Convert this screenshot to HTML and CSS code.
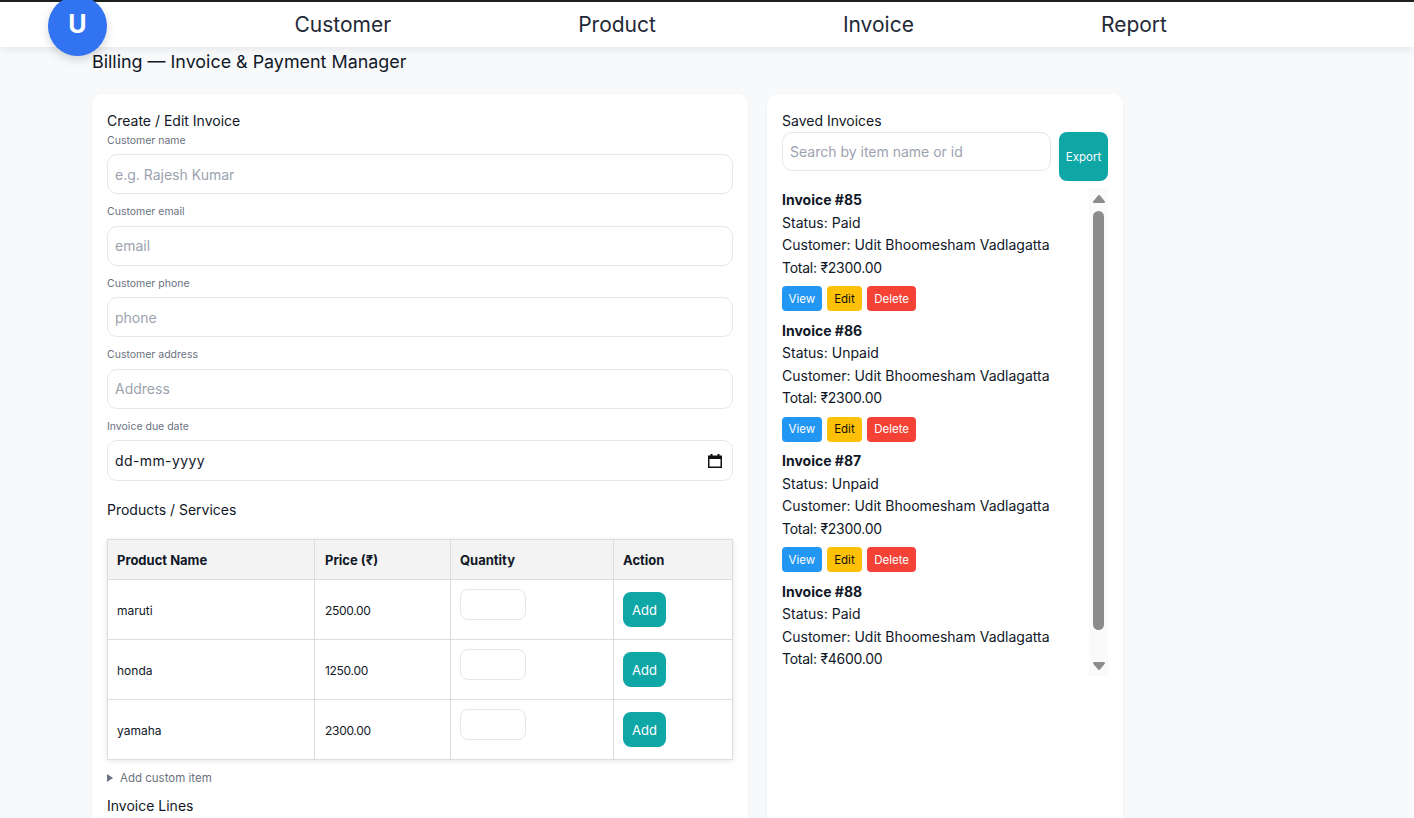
FILE: index.html
```html
<!DOCTYPE html>
<html lang="en">
<head>
    <meta charset="UTF-8">
    <meta name="viewport" content="width=device-width, initial-scale=1.0">
    <title>Billing</title>
    <link rel="stylesheet" href="styles.css">
</head>
<body>
    <header class="topbar">
        <div class="avatar">U</div>
        <nav class="nav">
            <a href="#">Customer</a>
            <a href="#">Product</a>
            <a href="#">Invoice</a>
            <a href="#">Report</a>
        </nav>
    </header>

    <main class="page">
        <h1 class="page-title">Billing — Invoice &amp; Payment Manager</h1>

        <div class="columns">
            <section class="card card-form">
                <h2 class="card-title card-title-form">Create / Edit Invoice</h2>

                <label class="field-label" for="custName">Customer name</label>
                <input class="field" id="custName" type="text" placeholder="e.g. Rajesh Kumar">

                <label class="field-label" for="custEmail">Customer email</label>
                <input class="field" id="custEmail" type="text" placeholder="email">

                <label class="field-label" for="custPhone">Customer phone</label>
                <input class="field" id="custPhone" type="text" placeholder="phone">

                <label class="field-label" for="custAddress">Customer address</label>
                <input class="field" id="custAddress" type="text" placeholder="Address">

                <label class="field-label" for="dueDate">Invoice due date</label>
                <div class="field field-date" id="dueDate">
                    <span>dd-mm-yyyy</span>
                    <svg width="16" height="16" viewBox="0 0 16 16" aria-hidden="true">
                        <path d="M3.500 1h2v1.500h5V1h2v1.500H15V15H1V2.500h2.500z" fill="#111"/>
                        <rect x="2.500" y="6" width="11" height="7.500" fill="#fff"/>
                    </svg>
                </div>

                <h3 class="section-title">Products / Services</h3>

                <table class="products">
                    <thead>
                        <tr>
                            <th class="col-name">Product Name</th>
                            <th class="col-price">Price (₹)</th>
                            <th class="col-qty">Quantity</th>
                            <th>Action</th>
                        </tr>
                    </thead>
                    <tbody>
                        <tr>
                            <td>maruti</td>
                            <td class="cell-price">2500.00</td>
                            <td class="cell-qty"><input class="qty" type="number" min="1"></td>
                            <td><button class="btn-teal btn-add">Add</button></td>
                        </tr>
                        <tr>
                            <td>honda</td>
                            <td class="cell-price">1250.00</td>
                            <td class="cell-qty"><input class="qty" type="number" min="1"></td>
                            <td><button class="btn-teal btn-add">Add</button></td>
                        </tr>
                        <tr>
                            <td>yamaha</td>
                            <td class="cell-price">2300.00</td>
                            <td class="cell-qty"><input class="qty" type="number" min="1"></td>
                            <td><button class="btn-teal btn-add">Add</button></td>
                        </tr>
                    </tbody>
                </table>

                <details class="custom-item">
                    <summary>Add custom item</summary>
                </details>

                <h3 class="lines-title">Invoice Lines</h3>
            </section>

            <aside class="card card-saved">
                <h2 class="card-title">Saved Invoices</h2>
                <div class="search-row">
                    <input class="search" type="text" placeholder="Search by item name or id">
                    <button class="btn-teal btn-export">Export</button>
                </div>

                <div class="saved-wrap">
                    <div class="saved-list">
                        <article class="invoice">
                            <strong>Invoice #85</strong>
                            <p>Status: Paid</p>
                            <p>Customer: Udit Bhoomesham Vadlagatta</p>
                            <p class="total">Total: ₹2300.00</p>
                            <div class="invoice-actions">
                                <button class="btn-sm btn-view">View</button>
                                <button class="btn-sm btn-edit">Edit</button>
                                <button class="btn-sm btn-delete">Delete</button>
                            </div>
                        </article>
                        <article class="invoice">
                            <strong>Invoice #86</strong>
                            <p>Status: Unpaid</p>
                            <p>Customer: Udit Bhoomesham Vadlagatta</p>
                            <p class="total">Total: ₹2300.00</p>
                            <div class="invoice-actions">
                                <button class="btn-sm btn-view">View</button>
                                <button class="btn-sm btn-edit">Edit</button>
                                <button class="btn-sm btn-delete">Delete</button>
                            </div>
                        </article>
                        <article class="invoice">
                            <strong>Invoice #87</strong>
                            <p>Status: Unpaid</p>
                            <p>Customer: Udit Bhoomesham Vadlagatta</p>
                            <p class="total">Total: ₹2300.00</p>
                            <div class="invoice-actions">
                                <button class="btn-sm btn-view">View</button>
                                <button class="btn-sm btn-edit">Edit</button>
                                <button class="btn-sm btn-delete">Delete</button>
                            </div>
                        </article>
                        <article class="invoice">
                            <strong>Invoice #88</strong>
                            <p>Status: Paid</p>
                            <p>Customer: Udit Bhoomesham Vadlagatta</p>
                            <p class="total">Total: ₹4600.00</p>
                        </article>
                    </div>
                    <div class="scrollbar">
                        <svg width="14" height="10" viewBox="0 0 14 10" aria-hidden="true">
                            <path d="M7 2 L12 8 L2 8 Z" fill="#8c8c8c" stroke="#8c8c8c" stroke-width="2" stroke-linejoin="round"/>
                        </svg>
                        <span class="thumb"></span>
                        <svg width="14" height="10" viewBox="0 0 14 10" aria-hidden="true">
                            <path d="M7 8 L12 2 L2 2 Z" fill="#8c8c8c" stroke="#8c8c8c" stroke-width="2" stroke-linejoin="round"/>
                        </svg>
                    </div>
                </div>
            </aside>
        </div>
    </main>
</body>
</html>
```

FILE: styles.css
```css
* {
    box-sizing: border-box;
}

html, body {
    height: 100%;
    overflow: hidden;
}

body {
    margin: 0;
    background-color: #f8f9fb;
    color: #111827;
    font-family: Inter, "Noto Sans", sans-serif;
    font-size: 14px;
}

.topbar {
    position: relative;
    height: 47px;
    background-color: #fff;
    border-top: 2px solid #1f1f1f;
    box-shadow: 0 2px 8px rgba(0, 0, 0, 0.08);
}

.avatar {
    position: absolute;
    left: 48px;
    top: -6px;
    width: 59px;
    height: 60px;
    padding-bottom: 4px;
    border-radius: 50%;
    background-color: #3173f1;
    color: #fff;
    font-size: 25px;
    font-weight: 700;
    display: flex;
    align-items: center;
    justify-content: center;
    box-shadow: 0 4px 10px rgba(0, 0, 0, 0.15);
}

.nav {
    display: flex;
    gap: 187px;
    padding-left: 294.500px;
    height: 45px;
    align-items: center;
}

.nav a {
    color: #1f2937;
    font-size: 21px;
    text-decoration: none;
}

.page {
    padding: 0 92px;
}

.page-title {
    margin: 4px 0 0;
    height: 43px;
    font-size: 17.900px;
    font-weight: 400;
    line-height: 22px;
}

.columns {
    display: flex;
    align-items: flex-start;
    gap: 19px;
}

.card {
    background-color: #fff;
    border-radius: 10px;
    padding: 18px 15px 15px;
    box-shadow: 0 1px 4px rgba(0, 0, 0, 0.03);
}

.card-form {
    width: 656px;
    height: 900px;
}

.card-saved {
    width: 356px;
    height: 900px;
}

.card-title {
    margin: 0;
    font-size: 14px;
    font-weight: 400;
    line-height: 18px;
}

.card-title-form {
    margin-bottom: 2.500px;
}

.field-label {
    display: block;
    color: #6b7280;
    font-size: 10.500px;
    line-height: 16px;
    margin-bottom: 5.500px;
}

.field {
    display: block;
    width: 100%;
    height: 40px;
    margin-bottom: 10px;
    padding: 0 7px;
    background-color: #fff;
    border: 1px solid #e5e7eb;
    border-radius: 10px;
    color: #111827;
    font-family: inherit;
    font-size: 14px;
}

.field::placeholder,
.search::placeholder {
    color: #9ca3af;
}

.field-date {
    display: flex;
    align-items: center;
    justify-content: space-between;
    height: 41px;
    margin-bottom: 9px;
    padding-right: 9px;
    letter-spacing: 0.400px;
}

.section-title {
    margin: 20px 0 20px;
    font-size: 14px;
    font-weight: 400;
    line-height: 18px;
}

.products {
    width: 100%;
    border-collapse: collapse;
    table-layout: fixed;
    font-size: 12px;
    box-shadow: 0 1px 6px rgba(0, 0, 0, 0.1);
}

.products th,
.products td {
    padding: 0 9px;
    border: 1px solid #ddd;
    text-align: left;
}

.products th {
    height: 40px;
    background-color: #f3f3f3;
    font-size: 13px;
    font-weight: 700;
}

.products td {
    height: 60px;
    padding-top: 1px;
}

.products .col-price,
.products .cell-price {
    padding-left: 10px;
}

.cell-price {
    letter-spacing: -0.300px;
}

.col-name {
    width: 207px;
}

.col-price {
    width: 136px;
}

.col-qty {
    width: 163px;
}

.products .cell-qty {
    vertical-align: top;
    padding-top: 0;
}

.qty {
    display: block;
    width: 66px;
    height: 31px;
    margin-top: 9px;
    background-color: #fff;
    border: 1px solid #e5e7eb;
    border-radius: 8px;
}

.btn-teal {
    background-color: #0fa6a6;
    border: none;
    border-radius: 8px;
    color: #fff;
    font-family: inherit;
    cursor: pointer;
}

.btn-add {
    display: block;
    width: 43px;
    height: 35px;
    margin-top: -1px;
    padding: 0;
    font-size: 13px;
}

.custom-item {
    margin-top: 10px;
    color: #6b7280;
    font-size: 11.500px;
    line-height: 16px;
}

.custom-item summary {
    display: flex;
    align-items: center;
    gap: 7px;
    list-style: none;
    cursor: pointer;
}

.custom-item summary::before {
    content: "";
    border-left: 6px solid #6b7280;
    border-top: 4px solid transparent;
    border-bottom: 4px solid transparent;
}

.lines-title {
    margin: 11px 0 0;
    font-size: 14px;
    font-weight: 400;
    line-height: 18px;
}

.search-row {
    display: flex;
    align-items: flex-start;
    gap: 8px;
    margin-top: 2px;
}

.search {
    flex: 1;
    min-width: 0;
    height: 39px;
    padding: 0 7px;
    background-color: #fff;
    border: 1px solid #e5e7eb;
    border-radius: 10px;
    font-family: inherit;
    font-size: 14px;
}

.btn-export {
    width: 49px;
    height: 49px;
    padding: 0;
    font-size: 11.500px;
}

.saved-wrap {
    display: flex;
    justify-content: space-between;
    height: 488px;
    margin-top: 7px;
}

.saved-list {
    width: 300px;
    padding-top: 1px;
    overflow: hidden;
}

.invoice {
    height: 130.500px;
    line-height: 22.500px;
}

.invoice strong {
    display: block;
    font-weight: 700;
}

.invoice p {
    margin: 0;
}

.invoice .total {
    letter-spacing: -0.250px;
}

.invoice-actions {
    display: flex;
    gap: 5px;
    margin-top: 7px;
}

.btn-sm {
    height: 25px;
    padding: 0 7px;
    border: none;
    border-radius: 4px;
    color: #fff;
    font-family: inherit;
    font-size: 11.500px;
    cursor: pointer;
}

.btn-view {
    padding: 0 6.500px;
    background-color: #2196f3;
}

.btn-edit {
    padding: 0 7.500px;
    background-color: #ffc107;
    color: #111;
}

.btn-delete {
    background-color: #f44336;
}

/* list scrollbar */
.scrollbar {
    display: flex;
    flex-direction: column;
    align-items: center;
    width: 19px;
    padding-top: 6px;
    background-color: #fafafa;
}

.thumb {
    width: 11px;
    height: 419px;
    margin: 7px 0 31px;
    border-radius: 6px;
    background-color: #8c8c8c;
}
```
